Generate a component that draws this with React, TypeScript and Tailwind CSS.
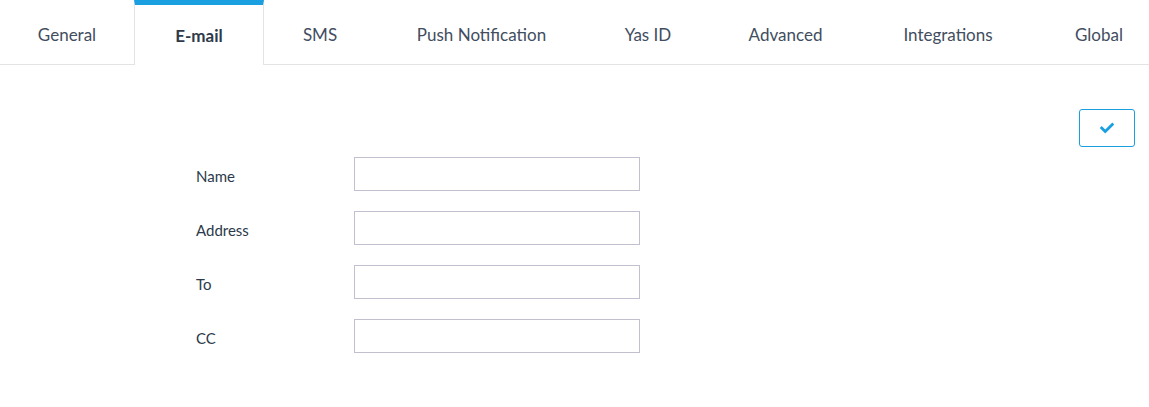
import { FaCheck } from 'react-icons/fa';

const tabs = [
  { label: 'General', width: 'w-[134px]' },
  { label: 'E-mail', width: 'w-[130px]', active: true },
  { label: 'SMS', width: 'w-[112px]' },
  { label: 'Push Notification', width: 'w-[211px]' },
  { label: 'Yas ID', width: 'w-[122px]' },
  { label: 'Advanced', width: 'w-[153px]' },
  { label: 'Integrations', width: 'w-[172px]' },
  { label: 'Global', width: 'w-[130px]' },
];

const fields = ['Name', 'Address', 'To', 'CC'];

export default function App() {
  return (
    <div className="h-[407px] w-[1149px] overflow-hidden bg-white font-['Lato',sans-serif]">
      <nav className="flex h-[65px] border-b border-[#e3e3e3]">
        {tabs.map((tab) =>
          tab.active ? (
            <div
              key={tab.label}
              className={`${tab.width} -mb-px flex shrink-0 items-center justify-center border-x border-t-[5px] border-x-[#e3e3e3] border-t-[#1a9fe0] bg-white pt-[1px] text-[17px] font-bold text-[#2e3a4a]`}
            >
              {tab.label}
            </div>
          ) : (
            <div
              key={tab.label}
              className={`${tab.width} flex shrink-0 items-center justify-center pt-[6px] text-[17px] text-[#414d60]`}
            >
              {tab.label}
            </div>
          )
        )}
      </nav>

      <main className="px-[14px] pt-[44px]">
        <div className="flex justify-end">
          <button className="flex h-[38px] w-[56px] items-center justify-center rounded-[3px] border border-[#1a9fe0] bg-white text-[#1a9fe0]">
            <FaCheck className="h-[14px] w-[14px]" />
          </button>
        </div>

        <form className="mt-[10px] flex flex-col gap-[20px] pl-[182px]">
          {fields.map((field) => (
            <div key={field} className="flex items-center">
              <label className="w-[158px] pt-[5px] text-[15px] text-[#2c3a4b]">{field}</label>
              <input
                type="text"
                className="h-[34px] w-[286px] border border-[#c2c0cf] bg-white px-2 text-[14px] outline-none"
              />
            </div>
          ))}
        </form>
      </main>
    </div>
  );
}
